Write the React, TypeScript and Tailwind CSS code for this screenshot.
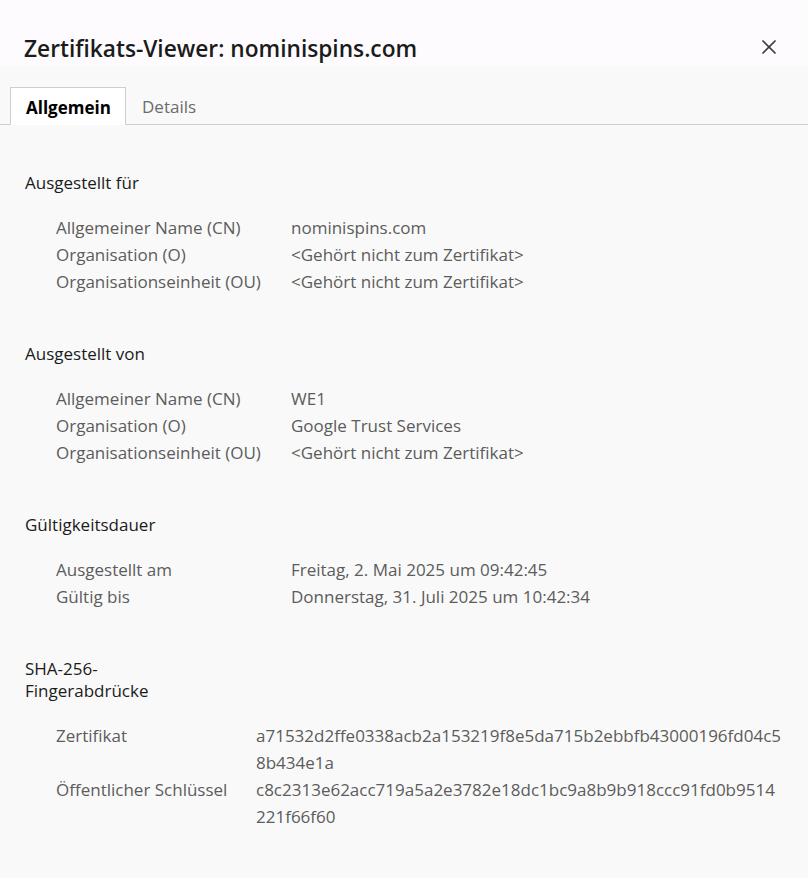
import { X } from "lucide-react";

type Row = { label: string; value: string[] };

const sections: { title: string[]; labelWidth: string; rows: Row[] }[] = [
  {
    title: ["Ausgestellt für"],
    labelWidth: "grid-cols-[235px_1fr]",
    rows: [
      { label: "Allgemeiner Name (CN)", value: ["nominispins.com"] },
      { label: "Organisation (O)", value: ["<Gehört nicht zum Zertifikat>"] },
      { label: "Organisationseinheit (OU)", value: ["<Gehört nicht zum Zertifikat>"] },
    ],
  },
  {
    title: ["Ausgestellt von"],
    labelWidth: "grid-cols-[235px_1fr]",
    rows: [
      { label: "Allgemeiner Name (CN)", value: ["WE1"] },
      { label: "Organisation (O)", value: ["Google Trust Services"] },
      { label: "Organisationseinheit (OU)", value: ["<Gehört nicht zum Zertifikat>"] },
    ],
  },
  {
    title: ["Gültigkeitsdauer"],
    labelWidth: "grid-cols-[235px_1fr]",
    rows: [
      { label: "Ausgestellt am", value: ["Freitag, 2. Mai 2025 um 09:42:45"] },
      { label: "Gültig bis", value: ["Donnerstag, 31. Juli 2025 um 10:42:34"] },
    ],
  },
  {
    title: ["SHA-256-", "Fingerabdrücke"],
    labelWidth: "grid-cols-[200px_1fr]",
    rows: [
      {
        label: "Zertifikat",
        value: ["a71532d2ffe0338acb2a153219f8e5da715b2ebbfb43000196fd04c5", "8b434e1a"],
      },
      {
        label: "Öffentlicher Schlüssel",
        value: ["c8c2313e62acc719a5a2e3782e18dc1bc9a8b9b918ccc91fd0b9514", "221f66f60"],
      },
    ],
  },
];

function Section({ title, labelWidth, rows }: { title: string[]; labelWidth: string; rows: Row[] }) {
  return (
    <div>
      <h2 className="text-[17px] leading-[22px] text-[#1b1b1b]">
        {title.map((t) => (
          <span key={t} className="block">
            {t}
          </span>
        ))}
      </h2>
      <div className={`mt-[20px] grid ${labelWidth} pl-[31px] text-[17px] leading-[27px] text-[#5c5c5c]`}>
        {rows.map((r) => (
          <div key={r.label} className="contents">
            <div className="whitespace-nowrap">{r.label}</div>
            <div>
              {r.value.map((v) => (
                <span key={v} className="block whitespace-nowrap">
                  {v}
                </span>
              ))}
            </div>
          </div>
        ))}
      </div>
    </div>
  );
}

export default function App() {
  return (
    <div
      className="min-h-[878px] w-[808px] bg-[#f9f9f9]"
      style={{ fontFamily: '"Open Sans", "Noto Sans", sans-serif' }}
    >
      <div className="flex h-[66px] items-start justify-between bg-[#fdfbfd] pt-[34px] pl-[24px] pr-[27px]">
        <h1 className="text-[22.7px] leading-[30px] font-semibold text-[#1b1b1b]">
          Zertifikats-Viewer: nominispins.com
        </h1>
        <button type="button" className="mt-[1px] text-[#3a3a3a]">
          <X className="size-[24px]" strokeWidth={1.7} />
        </button>
      </div>

      <div className="mt-[21px] flex border-b border-[#cfcfcf] pl-[10px]">
        <div className="-mb-px flex h-[38px] w-[116px] items-center border border-b-0 border-[#cfcfcf] bg-white pt-[2px] pl-[15px] text-[17px] font-bold text-black">
          Allgemein
        </div>
        <div className="flex h-[37px] items-center pt-[2px] pl-[16px] text-[17px] text-[#6b6b6b]">
          Details
        </div>
      </div>

      <div className="flex flex-col gap-[48px] px-[25px] pt-[47px] pb-10">
        {sections.map((s) => (
          <Section key={s.title.join("")} title={s.title} labelWidth={s.labelWidth} rows={s.rows} />
        ))}
      </div>
    </div>
  );
}
